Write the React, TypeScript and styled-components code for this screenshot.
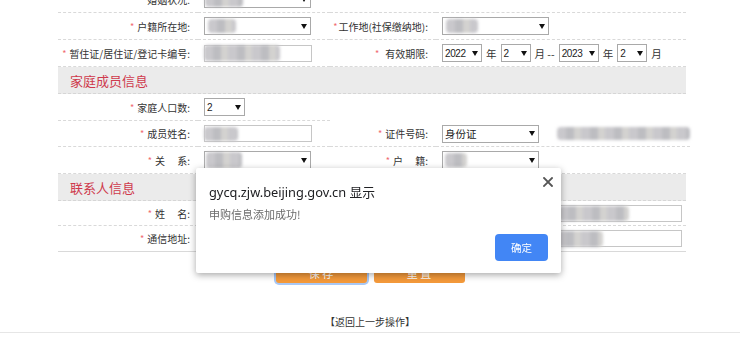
import React from 'react';
import styled, { createGlobalStyle } from 'styled-components';

const GlobalStyle = createGlobalStyle`
  html, body {
    margin: 0;
    padding: 0;
    background: #fff;
    overflow: hidden;
  }

  body {
    font-family: "Noto Sans CJK SC", "Noto Sans", sans-serif;
    color: #333;
  }
`;

const Page = styled.div`
  width: 740px;
  height: 356px;
  display: flex;
  flex-direction: column;
`;

const Form = styled.div`
  width: 628px;
  margin: -14px 0 0 58px;
  display: flex;
  flex-direction: column;
`;

const Row = styled.div<{ $h?: number }>`
  display: flex;
  height: ${({ $h }) => $h ?? 27}px;
`;

const Label = styled.div<{ $w: number; $bare?: boolean; $solid?: boolean }>`
  width: ${({ $w }) => $w}px;
  flex: none;
  box-sizing: border-box;
  display: flex;
  align-items: center;
  justify-content: flex-end;
  padding-right: 8px;
  font-size: 10px;
  white-space: nowrap;
  border-bottom: ${({ $bare, $solid }) =>
    $bare ? 'none' : `1px ${$solid ? 'solid' : 'dashed'} #d9d9d9`};
`;

const Field = styled.div<{ $w?: number; $bare?: boolean; $solid?: boolean }>`
  width: ${({ $w }) => ($w ? `${$w}px` : 'auto')};
  flex: ${({ $w }) => ($w ? 'none' : '1')};
  box-sizing: border-box;
  display: flex;
  align-items: center;
  gap: 3px;
  padding-left: 6px;
  font-size: 10.5px;
  border-bottom: ${({ $bare, $solid }) =>
    $bare ? 'none' : `1px ${$solid ? 'solid' : 'dashed'} #d9d9d9`};
`;

const Star = styled.span<{ $gap?: number }>`
  color: #f06a70;
  font-size: 9px;
  margin-right: ${({ $gap }) => $gap ?? 3}px;
`;

const Select = styled.div<{ $w: number }>`
  width: ${({ $w }) => $w}px;
  height: 18px;
  flex: none;
  box-sizing: border-box;
  border: 1px solid #a9a9a9;
  background: #fff;
  display: flex;
  align-items: center;
  justify-content: space-between;
  padding: 0 3px 0 2px;
  font-size: 10.5px;
  color: #222;
`;

const Num = styled.span`
  font-family: "Liberation Sans", "Noto Sans", sans-serif;
  font-size: 10px;
  letter-spacing: -0.4px;
`;

const TextInput = styled.div<{ $w: number }>`
  width: ${({ $w }) => $w}px;
  height: 17px;
  flex: none;
  box-sizing: border-box;
  border: 1px solid #c6c6c6;
  background: #fff;
  display: flex;
  align-items: center;
`;

const Blob = styled.span<{ $w: number; $h?: number; $ml?: number }>`
  display: block;
  flex: none;
  width: ${({ $w }) => $w}px;
  height: ${({ $h }) => $h ?? 14}px;
  margin-left: ${({ $ml }) => $ml ?? -2}px;
  border-radius: 4px;
  background: repeating-linear-gradient(
    90deg,
    #c9c8cc 0 9px,
    #bdbdc1 9px 17px,
    #d3d2d0 17px 24px
  );
  filter: blur(1.4px);
`;

const Unit = styled.span`
  font-size: 10.5px;
  color: #333;
  padding: 0 1px;
`;

const SectionHead = styled.div`
  height: 27px;
  box-sizing: border-box;
  background: #ebebeb;
  border-bottom: 1px dashed #d6d6d6;
  display: flex;
  align-items: center;
  padding-left: 12px;
  color: #cf3a4d;
  font-size: 13px;
`;

const ButtonBar = styled.div`
  display: flex;
  justify-content: center;
  gap: 7px;
  margin-top: 10px;
`;

const OrangeButton = styled.button<{ $focused?: boolean }>`
  width: 91px;
  height: 21px;
  border: none;
  border-radius: 3px;
  background: #f49a3b;
  color: #fff;
  font-family: inherit;
  font-size: 11px;
  padding: 0;
  box-shadow: ${({ $focused }) => ($focused ? '0 0 0 2px #a9c8f5' : 'none')};
`;

const BackLink = styled.div`
  margin-top: 33px;
  text-align: center;
  font-size: 10px;
  line-height: 12px;
  color: #333;
`;

const BottomLine = styled.div`
  margin-top: 4px;
  border-top: 1px solid #e6e6e6;
`;

const Dialog = styled.div`
  position: fixed;
  left: 196px;
  top: 168px;
  width: 365px;
  box-sizing: border-box;
  padding: 15px 13px 12px;
  background: #fff;
  border-radius: 2px;
  box-shadow: 0 2px 7px rgba(0, 0, 0, 0.35);
  display: flex;
  flex-direction: column;
`;

const DialogTitle = styled.div`
  font-family: "Noto Sans", "Noto Sans CJK SC", sans-serif;
  font-size: 12.8px;
  line-height: 18px;
  color: #202124;
`;

const DialogMessage = styled.div`
  margin-top: 5px;
  font-size: 11px;
  line-height: 16px;
  color: #6b6b6b;
`;

const DialogActions = styled.div`
  display: flex;
  justify-content: flex-end;
  margin-top: 12px;
`;

const OkButton = styled.button`
  width: 53px;
  height: 27px;
  border: none;
  border-radius: 4px;
  background: #4286f5;
  color: #fff;
  font-family: inherit;
  font-size: 10.5px;
  padding: 0;
`;

const CloseButton = styled.span`
  position: absolute;
  right: 8px;
  top: 9px;
  width: 10px;
  height: 10px;
  display: flex;
`;

const Arrow = () => (
  <svg width="6" height="5" viewBox="0 0 6 5">
    <path d="M0 0h6L3 5z" fill="#111" />
  </svg>
);

const LEFT_LABEL = 140;
const LEFT_FIELD = 132;
const RIGHT_LABEL = 106;

const Req: React.FC<{ text: React.ReactNode; gap?: number }> = ({
  text,
  gap,
}) => (
  <>
    <Star $gap={gap}>*</Star>
    {text}
  </>
);

const App: React.FC = () => (
  <Page>
    <GlobalStyle />
    <Form>
      <Row>
        <Label $w={LEFT_LABEL}>婚姻状况:</Label>
        <Field $w={LEFT_FIELD}>
          <Select $w={107}>
            <Blob $w={38} $h={15} />
            <Arrow />
          </Select>
        </Field>
        <Label $w={RIGHT_LABEL} />
        <Field />
      </Row>
      <Row>
        <Label $w={LEFT_LABEL}>
          <Req text="户籍所在地:" />
        </Label>
        <Field $w={LEFT_FIELD}>
          <Select $w={107}>
            <Blob $w={28} $h={14} $ml={1} />
            <Arrow />
          </Select>
        </Field>
        <Label $w={RIGHT_LABEL}>
          <Req text="工作地(社保缴纳地):" gap={1} />
        </Label>
        <Field>
          <Select $w={107}>
            <Blob $w={32} $h={14} $ml={1} />
            <Arrow />
          </Select>
        </Field>
      </Row>
      <Row>
        <Label $w={LEFT_LABEL}>
          <Req text="暂住证/居住证/登记卡编号:" />
        </Label>
        <Field $w={LEFT_FIELD}>
          <TextInput $w={108}>
            <Blob $w={76} $h={16} $ml={-1} />
          </TextInput>
        </Field>
        <Label $w={RIGHT_LABEL}>
          <Req text="有效期限:" gap={6} />
        </Label>
        <Field>
          <Select $w={40}>
            <Num>2022</Num>
            <Arrow />
          </Select>
          <Unit>年</Unit>
          <Select $w={30}>
            <Num>2</Num>
            <Arrow />
          </Select>
          <Unit>月 --</Unit>
          <Select $w={40}>
            <Num>2023</Num>
            <Arrow />
          </Select>
          <Unit>年</Unit>
          <Select $w={30}>
            <Num>2</Num>
            <Arrow />
          </Select>
          <Unit>月</Unit>
        </Field>
      </Row>

      <SectionHead>家庭成员信息</SectionHead>
      <Row>
        <Label $w={LEFT_LABEL}>
          <Req text="家庭人口数:" />
        </Label>
        <Field $w={LEFT_FIELD}>
          <Select $w={41}>
            <Num>2</Num>
            <Arrow />
          </Select>
        </Field>
        <Label $w={RIGHT_LABEL} $bare />
        <Field $bare />
      </Row>
      <Row $h={26}>
        <Label $w={LEFT_LABEL}>
          <Req text="成员姓名:" />
        </Label>
        <Field $w={LEFT_FIELD}>
          <TextInput $w={108}>
            <Blob $w={34} $h={14} $ml={-1} />
          </TextInput>
        </Field>
        <Label $w={RIGHT_LABEL}>
          <Req text="证件号码:" />
        </Label>
        <Field>
          <Select $w={97}>
            身份证
            <Arrow />
          </Select>
          <Blob $w={133} $h={13} $ml={15} />
        </Field>
      </Row>
      <Row>
        <Label $w={LEFT_LABEL}>
          <Req text="关　 系:" />
        </Label>
        <Field $w={LEFT_FIELD}>
          <Select $w={107}>
            <Blob $w={36} $h={16} $ml={-1} />
            <Arrow />
          </Select>
        </Field>
        <Label $w={RIGHT_LABEL}>
          <Req text="户　 籍:" />
        </Label>
        <Field>
          <Select $w={97}>
            <Blob $w={22} $h={14} $ml={0} />
            <Arrow />
          </Select>
        </Field>
      </Row>

      <SectionHead>联系人信息</SectionHead>
      <Row $h={25}>
        <Label $w={LEFT_LABEL}>
          <Req text="姓　 名:" />
        </Label>
        <Field>
          <TextInput $w={478}>
            <Blob $w={70} $h={15} $ml={354} />
          </TextInput>
        </Field>
      </Row>
      <Row $h={26}>
        <Label $w={LEFT_LABEL} $solid>
          <Req text="通信地址:" />
        </Label>
        <Field $solid>
          <TextInput $w={478}>
            <Blob $w={46} $h={16} $ml={352} />
          </TextInput>
        </Field>
      </Row>
    </Form>

    <ButtonBar>
      <OrangeButton $focused>保 存</OrangeButton>
      <OrangeButton>重 置</OrangeButton>
    </ButtonBar>
    <BackLink>【返回上一步操作】</BackLink>
    <BottomLine />

    <Dialog>
      <CloseButton>
        <svg width="10" height="10" viewBox="0 0 10 10">
          <path
            d="M1 1L9 9M9 1L1 9"
            stroke="#555"
            strokeWidth="1.8"
            strokeLinecap="square"
          />
        </svg>
      </CloseButton>
      <DialogTitle>gycq.zjw.beijing.gov.cn 显示</DialogTitle>
      <DialogMessage>申购信息添加成功!</DialogMessage>
      <DialogActions>
        <OkButton>确定</OkButton>
      </DialogActions>
    </Dialog>
  </Page>
);

export default App;
